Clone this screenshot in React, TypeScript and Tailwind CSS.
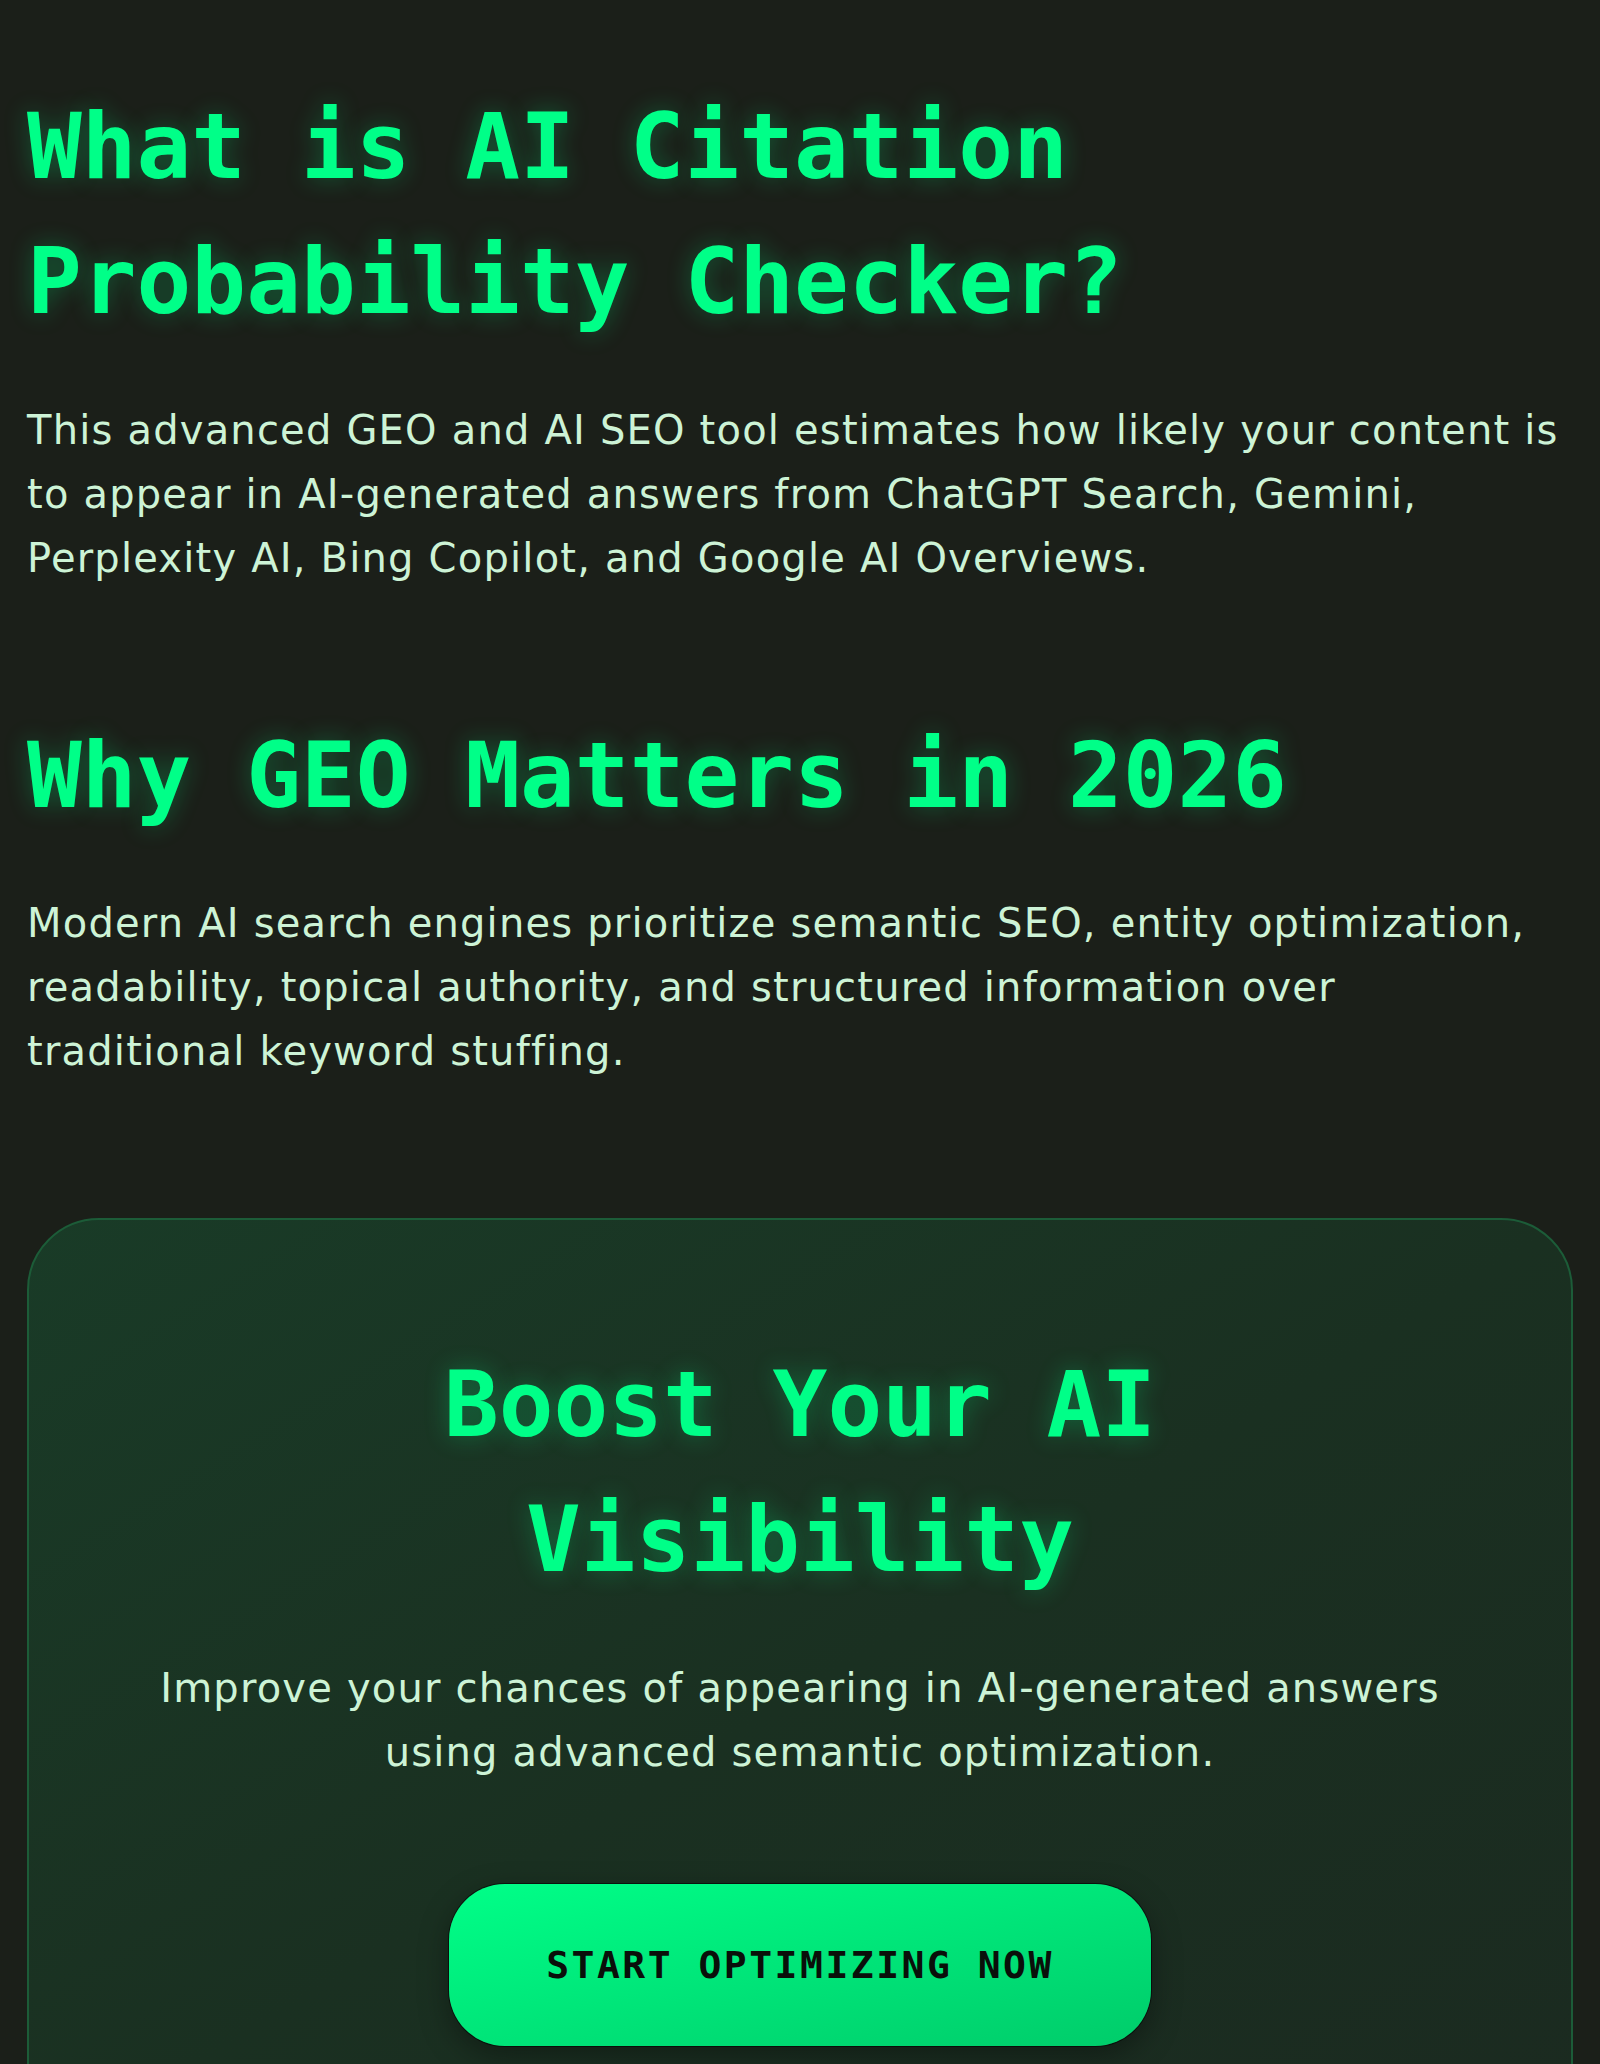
import React from 'react';

const mono = "font-['DejaVu_Sans_Mono','Liberation_Mono',monospace]";
const sans = "font-['DejaVu_Sans','Inter',sans-serif]";

const headingCls = `${mono} font-bold text-[91px] leading-[135px] text-[#00ff88] [text-shadow:0_0_24px_rgba(0,255,136,0.28)]`;
const bodyCls = `${sans} text-[40px] leading-[64px] tracking-[1.2px] text-[#cdf3d6]`;

const App = () => {
  return (
    <div className="min-h-screen bg-[#1b1f19] px-[27px] pt-[79px] pb-20">
      <section>
        <h2 className={headingCls}>What is AI Citation Probability Checker?</h2>
        <p className={`${bodyCls} mt-[49px]`}>
          This advanced GEO and AI SEO tool estimates how likely your content is to appear in
          AI-generated answers from ChatGPT Search, Gemini, Perplexity AI, Bing Copilot, and
          Google AI Overviews.
        </p>
      </section>

      <section className="mt-[118px]">
        <h2 className={headingCls}>Why GEO Matters in 2026</h2>
        <p className={`${bodyCls} mt-[48px] max-w-[1520px]`}>
          Modern AI search engines prioritize semantic SEO, entity optimization, readability,
          topical authority, and structured information over traditional keyword stuffing.
        </p>
      </section>

      <section className="mt-[135px] rounded-[72px] border-2 border-[#1c5c38] bg-gradient-to-br from-[#193b27] via-[#1a3021] to-[#1b2a20] px-[118px] pt-[117px] pb-[120px] text-center">
        <h2 className={headingCls}>Boost Your AI Visibility</h2>
        <p className={`${bodyCls} mx-auto mt-[49px] max-w-[1310px]`}>
          Improve your chances of appearing in AI-generated answers using advanced semantic
          optimization.
        </p>
        <button
          type="button"
          className={`${mono} mt-[100px] inline-flex h-[162px] w-[702px] items-center justify-center rounded-[56px] bg-gradient-to-br from-[#00ff88] to-[#00cc6a] text-[38px] font-bold tracking-[2.5px] text-[#0a0f0a] shadow-[0_0_0_1px_rgba(0,0,0,0.55),0_10px_30px_rgba(0,0,0,0.35)]`}
        >
          START OPTIMIZING NOW
        </button>
      </section>
    </div>
  );
};

export default App;
